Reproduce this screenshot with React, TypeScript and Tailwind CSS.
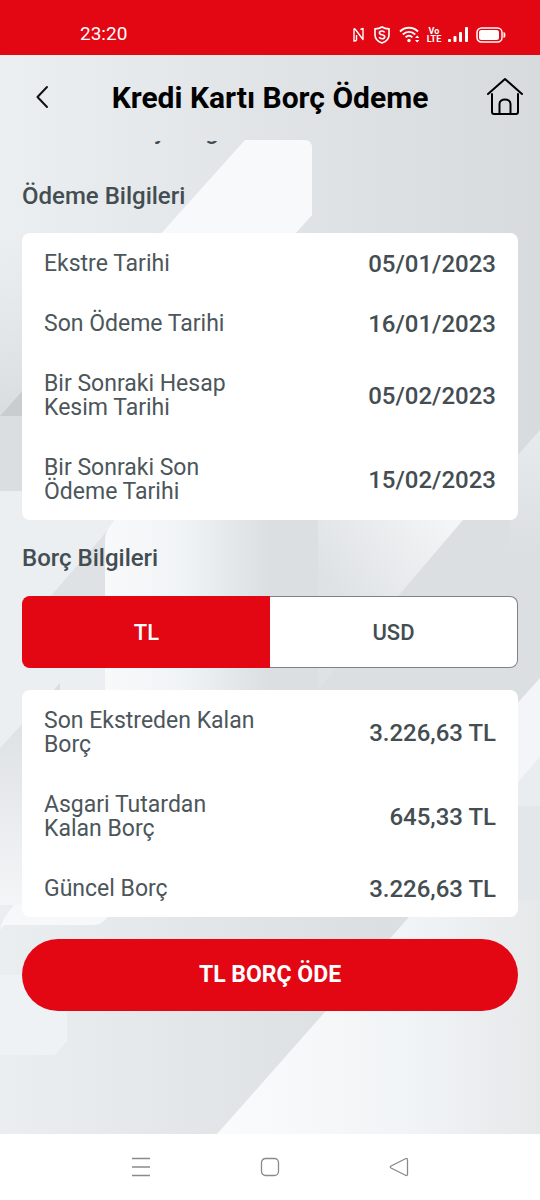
import { useState } from "react";

const FONTS = "font-['Roboto','Noto_Sans',sans-serif]";

const paymentRows = [
  { label: "Ekstre Tarihi", value: "05/01/2023" },
  { label: "Son Ödeme Tarihi", value: "16/01/2023" },
  { label: "Bir Sonraki Hesap Kesim Tarihi", value: "05/02/2023" },
  { label: "Bir Sonraki Son Ödeme Tarihi", value: "15/02/2023" },
];

const debtRows = [
  { label: "Son Ekstreden Kalan Borç", value: "3.226,63 TL" },
  { label: "Asgari Tutardan Kalan Borç", value: "645,33 TL" },
  { label: "Güncel Borç", value: "3.226,63 TL" },
];

const currencies = ["TL", "USD"];

function StatusBar() {
  return (
    <div className="flex h-[55px] items-center justify-between bg-[#e30613] pt-[14px] pr-[34px] pl-20 text-white">
      <span className="text-[19px]">23:20</span>
      <div className="flex items-center gap-2">
        {/* NFC */}
        <svg width="12" height="15" viewBox="0 0 12 15" fill="none" stroke="currentColor" strokeWidth="1.4" strokeLinejoin="round">
          <path d="M3.500 13.500 1 14V2.500q0-1.500 1.200-.2L10 12.500V1.500L7.500 2.500M3.500 13.500V8" />
        </svg>
        {/* Shield */}
        <svg width="18" height="18" viewBox="0 0 18 18" fill="none" stroke="currentColor" strokeWidth="1.6">
          <path d="M9 1c2 1.300 4.500 1.800 7 1.900V9c0 4-3 6.500-7 8-4-1.500-7-4-7-8V2.900C4.500 2.800 7 2.300 9 1Z" />
          <path d="M11.600 6.500C11.200 5.500 10.200 5 9 5c-1.500 0-2.600.8-2.600 1.900C6.400 9.400 11.700 8 11.700 10.700c0 1.300-1.200 2-2.700 2-1.300 0-2.300-.5-2.800-1.600" />
        </svg>
        {/* Wi-Fi */}
        <svg width="21" height="17" viewBox="0 0 21 17" fill="none" stroke="currentColor" strokeWidth="1.900">
          <path d="M1 5.500c5-5 13-5 18 0M3.800 8.500c3.600-3.500 8.800-3.500 12.400 0M6.600 11.400c2-1.900 4.800-1.900 6.800 0" />
          <circle cx="10" cy="14.500" r="1.700" fill="currentColor" stroke="none" />
          <path d="m16 12 2.200-2.500L20.400 12ZM16 14l2.200 2.500L20.400 14Z" fill="currentColor" stroke="none" />
        </svg>
        <span className="flex w-3 flex-col items-center text-[9px] leading-[8px] font-bold">
          <span>Vo</span>
          <span>LTE</span>
        </span>
        {/* Signal */}
        <svg width="20" height="15" viewBox="0 0 20 15" fill="currentColor">
          <rect x="0" y="12" width="3" height="3" rx="1" />
          <rect x="5.500" y="9" width="3" height="6" rx="1" />
          <rect x="11" y="5" width="3" height="10" rx="1" />
          <rect x="17" y="0" width="3" height="15" rx="1" />
        </svg>
        {/* Battery */}
        <svg width="30" height="16" viewBox="0 0 30 16" fill="none">
          <rect x="1" y="1" width="25" height="14" rx="4.500" stroke="currentColor" strokeWidth="1.500" />
          <rect x="3" y="3" width="20" height="10" rx="2.500" fill="currentColor" />
          <path d="M28 5.500c1.300.7 1.300 4.300 0 5Z" fill="currentColor" stroke="currentColor" />
        </svg>
      </div>
    </div>
  );
}

// Faceted grey artwork behind the whole page
function Backdrop() {
  return (
    <svg
      className="absolute inset-0 h-full w-full"
      viewBox="0 55 540 1079"
      preserveAspectRatio="none"
      aria-hidden="true"
    >
      <defs>
        <linearGradient id="base" x1="0" x2="1" y1="0" y2="0">
          <stop offset="0" stopColor="#eceff1" />
          <stop offset="0.450" stopColor="#e2e5e7" />
          <stop offset="1" stopColor="#d8dbde" />
        </linearGradient>
        <linearGradient id="leftShade" x1="0" x2="0" y1="0" y2="1">
          <stop offset="0" stopColor="#dfe2e4" stopOpacity="0" />
          <stop offset="1" stopColor="#d9dcdf" />
        </linearGradient>
        <linearGradient id="column" x1="0" x2="1" y1="0" y2="0">
          <stop offset="0" stopColor="#f8f9fb" />
          <stop offset="0.350" stopColor="#f1f4f6" />
          <stop offset="0.750" stopColor="#dcdfe2" />
          <stop offset="1" stopColor="#dcdfe2" />
        </linearGradient>
        <linearGradient id="facet" gradientUnits="userSpaceOnUse" x1="450" y1="519" x2="340" y2="600">
          <stop offset="0" stopColor="#f3f5f6" />
          <stop offset="1" stopColor="#dfe2e5" />
        </linearGradient>
        <linearGradient id="rightFacet" x1="0" x2="0" y1="0" y2="1">
          <stop offset="0" stopColor="#e8ebed" />
          <stop offset="0.700" stopColor="#dcdfe2" />
          <stop offset="1" stopColor="#dcdfe2" />
        </linearGradient>
        <linearGradient id="left" x1="0" x2="0" y1="0" y2="1">
          <stop offset="0" stopColor="#dadddf" />
          <stop offset="1" stopColor="#f5f7f9" />
        </linearGradient>
        <linearGradient id="lower" x1="0" x2="1" y1="0" y2="0">
          <stop offset="0" stopColor="#ebeef0" />
          <stop offset="0.700" stopColor="#dcdfe1" />
          <stop offset="1" stopColor="#dcdfe1" />
        </linearGradient>
        <linearGradient id="corner" x1="0" x2="1" y1="0" y2="0">
          <stop offset="0" stopColor="#fafbfc" />
          <stop offset="0.600" stopColor="#f1f4f6" />
          <stop offset="1" stopColor="#e6e8ea" />
        </linearGradient>
      </defs>
      <rect y="55" width="540" height="1079" fill="url(#base)" />
      <rect y="230" width="60" height="190" fill="url(#leftShade)" />
      <path d="M245 140h59q8 0 8 8v67l-125 140H52Z" fill="#f8f9fb" />
      <path d="M0 416 50 360v56Z" fill="#c9cdd0" />
      <path d="M0 416h110v75H0Z" fill="#dbdee1" />
      <path d="M0 491h300v420H0Z" fill="#ebeff1" />
      <path d="M108 530 50 597h60Z" fill="#dfe2e4" />
      <path d="M105 540q0-8 8-18l20-22h190v410H105Z" fill="url(#column)" />
      <path d="M318 500h222v420H318Z" fill="#dcdfe2" />
      <path d="M318 500h162L318 690Z" fill="url(#facet)" />
      <path d="M540 430 510 464v140h30Z" fill="url(#rightFacet)" />
      <path d="M540 678 440 790v100h100Z" fill="#f3f5f8" />
      <path d="M540 757 440 870h100Z" fill="#e9edf0" />
      <path d="M440 806h100v120H440Z" fill="#e4e7ea" />
      <path d="M0 748 60 683v237H0Z" fill="url(#left)" />
      <path d="M0 905h540v229H0Z" fill="url(#lower)" />
      <path d="M0 930q2-12 14-25h98l-3 10q-6 10-16 10H4Z" fill="#f6f8f9" />
      <path d="M0 975h67v66l-12 14H0Z" fill="#eef2f4" />
      <path d="M424 900h116v234H217Z" fill="url(#corner)" />
    </svg>
  );
}

function DetailList({ rows }: { rows: { label: string; value: string }[] }) {
  return (
    <dl className="flex flex-col gap-9 rounded-lg bg-white px-[22px] pt-[19px] pb-4 text-[#434d52]">
      {rows.map((row) => (
        <div key={row.label} className="flex items-center justify-between">
          <dt className="max-w-[220px] text-[23px] leading-6 font-normal text-[#4c565b]">{row.label}</dt>
          <dd className="text-2xl leading-6 font-medium">{row.value}</dd>
        </div>
      ))}
    </dl>
  );
}

export default function App() {
  const [currency, setCurrency] = useState("TL");

  return (
    <div className={`flex min-h-screen flex-col bg-white ${FONTS}`}>
      <StatusBar />

      <div className="relative flex flex-1 flex-col">
        <Backdrop />

        {/* Header */}
        <header className="relative grid h-[86px] grid-cols-[52px_1fr_52px] items-center px-4 pb-0.5">
          <button type="button" aria-label="Geri" className="flex justify-center">
            <svg width="20" height="24" viewBox="0 0 20 24" fill="none" stroke="#111" strokeWidth="2">
              <path d="M15 2 5.500 12 15 22" strokeLinecap="round" strokeLinejoin="round" />
            </svg>
          </button>
          <h1 className="text-center text-[30px] font-bold text-black">Kredi Kartı Borç Ödeme</h1>
          <button type="button" aria-label="Ana Sayfa" className="flex justify-end">
            <svg width="38" height="40" viewBox="0 0 38 40" fill="none" stroke="#000" strokeWidth="2" strokeLinecap="round" strokeLinejoin="round">
              <path d="M2 17 19 2l17 15M6 17v18q0 2 2 2h22q2 0 2-2V17M13.500 37V27c0-6 11-6 11 0v10" />
            </svg>
          </button>
        </header>

        <main className="relative flex flex-col px-[22px]">
          {/* Tail of the section that is scrolled under the header */}
          <div className="flex h-1 items-end overflow-hidden">
            <h2 className="text-2xl leading-7 font-medium text-[#434d52]">Ödeme Detayı Bilgileri</h2>
          </div>

          <h2 className="mt-[37px] mb-[23px] text-2xl leading-7 font-medium text-[#434d52]">Ödeme Bilgileri</h2>
          <DetailList rows={paymentRows} />

          <h2 className="my-6 text-2xl leading-7 font-medium text-[#434d52]">Borç Bilgileri</h2>
          <div className="mb-[22px] flex h-[72px]">
            {currencies.map((item) => (
              <button
                key={item}
                type="button"
                aria-pressed={currency === item}
                onClick={() => setCurrency(item)}
                className={`flex-1 border text-[22px] font-medium first:rounded-l-lg first:border-r-0 last:rounded-r-lg last:border-l-0 ${
                  currency === item
                    ? "border-[#e30613] bg-[#e30613] text-white"
                    : "border-[#7d8488] bg-white text-[#434d52]"
                }`}
              >
                {item}
              </button>
            ))}
          </div>
          <DetailList rows={debtRows} />

          <button type="button" className="mt-[22px] h-[72px] rounded-full bg-[#e30613] text-[23px] font-bold text-white">
            TL BORÇ ÖDE
          </button>
        </main>
      </div>

      {/* System navigation */}
      <nav className="flex h-[66px] items-center justify-center gap-[109px] text-[#8a8a8a]">
        <button type="button" aria-label="Son uygulamalar">
          <svg width="20" height="20" viewBox="0 0 20 20" fill="none" stroke="currentColor" strokeWidth="1.500">
            <path d="M1 1.500h18M1 10h18M1 18.500h18" />
          </svg>
        </button>
        <button type="button" aria-label="Ana ekran">
          <svg width="20" height="20" viewBox="0 0 20 20" fill="none" stroke="currentColor" strokeWidth="1.300">
            <rect x="1.500" y="1.500" width="17" height="17" rx="4" />
          </svg>
        </button>
        <button type="button" aria-label="Geri dön">
          <svg width="20" height="20" viewBox="0 0 20 20" fill="none" stroke="currentColor" strokeWidth="1.300">
            <path d="M17 1.500 2 9q-1.500 1 0 2l15 7.500q1.500.5 1.500-1.500V3q0-2-1.500-1.500Z" strokeLinejoin="round" />
          </svg>
        </button>
      </nav>
    </div>
  );
}
